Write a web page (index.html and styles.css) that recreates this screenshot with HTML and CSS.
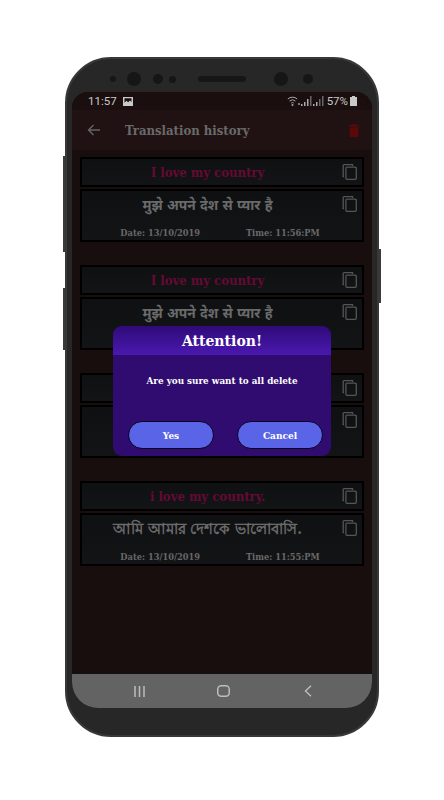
FILE: index.html
```html
<!DOCTYPE html>
<html lang="en">
<head>
  <meta charset="UTF-8">
  <meta name="viewport" content="width=device-width, initial-scale=1.0">
  <title>Translation history</title>
  <link rel="stylesheet" href="styles.css">
</head>
<body>
  <div class="phone">
    <span class="side-btn btn-a"></span>
    <span class="side-btn btn-b"></span>
    <span class="side-btn btn-c"></span>

    <div class="sensors">
      <span class="dot d6"></span>
      <span class="dot d14"></span>
      <span class="dot d10"></span>
      <span class="dot d8"></span>
      <span class="speaker"></span>
      <span class="dot d14"></span>
      <span class="dot d10 last"></span>
    </div>

    <div class="screen">
      <div class="status-bar">
        <span class="clock">11:57</span>
        <svg class="pic-icon" width="10" height="9" viewBox="0 0 10 9"><path fill="#c9c9c9" fill-rule="evenodd" d="M0 0h10v9H0zM1.5 1.2v4.6l2-2 1.6 1.5L7 3.4l1.5 1.5V1.2z"/></svg>
        <span class="status-right">
          <svg width="13" height="10" viewBox="0 0 13 10"><path fill="none" stroke="#aaa" d="M.8 3a7 7 0 0 1 9.4 0M2.6 5a4.4 4.4 0 0 1 5.8 0M4.3 7a2 2 0 0 1 2.4 0"/><circle cx="5.5" cy="9" r="1" fill="#aaa"/><path fill="#777" d="M11 7h2v2h-2z"/></svg>
          <svg width="11" height="10" viewBox="0 0 11 10"><path fill="#aaa" d="M0 8h1.5v2H0zM3 6h1.5v4H3zM6 3h1.5v7H6z"/><path fill="#666" d="M9 0h1.5v10H9z"/></svg>
          <svg width="11" height="10" viewBox="0 0 11 10"><path fill="#aaa" d="M0 8h1.5v2H0zM3 6h1.5v4H3z"/><path fill="#666" d="M6 3h1.5v7H6zM9 0h1.5v10H9z"/></svg>
          <span class="battery-text">57%</span>
          <svg width="7" height="10" viewBox="0 0 7 10"><path fill="#c9c9c9" d="M2 0h3v1h2v9H0V1h2z"/></svg>
        </span>
      </div>

      <div class="toolbar">
        <svg class="back" width="14" height="12" viewBox="0 0 14 12"><path fill="none" stroke="#666" stroke-width="1.3" d="M13 6H1.5M6.5 1 1.5 6l5 5"/></svg>
        <span class="toolbar-title">Translation history</span>
        <svg class="trash" width="10" height="13" viewBox="0 0 10 13"><path fill="#5c0808" d="M3.5 0h3l.5 1h3v1.5H0V1h3zM.7 3.3h8.6V13H.7z"/></svg>
      </div>

      <div class="history">
        <div class="item">
          <div class="card source">
            <span class="source-text">I love my country</span>
            <svg class="copy"><use href="#copy-icon"/></svg>
          </div>
          <div class="card result">
            <div class="result-text">मुझे अपने देश से प्यार है</div>
            <svg class="copy"><use href="#copy-icon"/></svg>
            <div class="stamp"><span>Date: 13/10/2019</span><span>Time: 11:56:PM</span></div>
          </div>
        </div>

        <!-- the dialog covers the rest of this one -->
        <div class="item">
          <div class="card source">
            <span class="source-text">I love my country</span>
            <svg class="copy"><use href="#copy-icon"/></svg>
          </div>
          <div class="card result">
            <div class="result-text">मुझे अपने देश से प्यार है</div>
            <svg class="copy"><use href="#copy-icon"/></svg>
          </div>
        </div>

        <!-- only the copy icons show here -->
        <div class="item">
          <div class="card source">
            <svg class="copy"><use href="#copy-icon"/></svg>
          </div>
          <div class="card result">
            <svg class="copy"><use href="#copy-icon"/></svg>
          </div>
        </div>

        <div class="item">
          <div class="card source">
            <span class="source-text">i love my country.</span>
            <svg class="copy"><use href="#copy-icon"/></svg>
          </div>
          <div class="card result">
            <div class="result-text bengali">আমি আমার দেশকে ভালোবাসি.</div>
            <svg class="copy"><use href="#copy-icon"/></svg>
            <div class="stamp"><span>Date: 13/10/2019</span><span>Time: 11:55:PM</span></div>
          </div>
        </div>
      </div>

      <div class="nav-bar">
        <span class="nav-cell">
          <svg width="11" height="11" viewBox="0 0 11 11"><path stroke="#bdbdbd" stroke-width="1.5" d="M1 0v11M5.5 0v11M10 0v11"/></svg>
        </span>
        <span class="nav-cell">
          <svg width="13" height="12" viewBox="0 0 13 12"><rect x=".75" y=".75" width="11.5" height="10.5" rx="3.5" fill="none" stroke="#bdbdbd" stroke-width="1.5"/></svg>
        </span>
        <span class="nav-cell">
          <svg width="8" height="12" viewBox="0 0 8 12"><path fill="none" stroke="#bdbdbd" stroke-width="1.4" d="M7 .8 1.5 6 7 11.2"/></svg>
        </span>
      </div>

      <div class="dialog">
        <div class="dialog-head">Attention!</div>
        <div class="dialog-msg">Are you sure want to all delete</div>
        <div class="dialog-actions">
          <button class="dialog-btn">Yes</button>
          <button class="dialog-btn">Cancel</button>
        </div>
      </div>
    </div>
  </div>

  <svg width="0" height="0" class="defs">
    <symbol id="copy-icon" viewBox="0 0 15 16">
      <path fill="none" stroke="#555" stroke-width="1.3" d="M2 12.5H1.2V1.6Q1.2.7 2.1.7H10.5V2"/>
      <rect x="3.9" y="3.2" width="10.4" height="12.1" rx="1" fill="none" stroke="#555" stroke-width="1.3"/>
    </symbol>
  </svg>
</body>
</html>
```

FILE: styles.css
```css
body, html {
  margin: 0;
  padding: 0;
  background: #fff;
}
body {
  font-family: "DejaVu Serif", "Noto Sans", serif;
  font-stretch: condensed;
}
.defs {
  position: absolute;
}
.phone {
  position: relative;
  box-sizing: border-box;
  width: 314px;
  height: 680px;
  margin: 57px 0 0 65px;
  padding: 13px 5px 27px;
  background: #272727;
  border: 2px solid #383838;
  border-radius: 46px;
  display: flex;
  flex-direction: column;
}
.side-btn {
  position: absolute;
  width: 2px;
  background: #3a3a3a;
}
.btn-a {
  left: -4px;
  top: 97px;
  height: 96px;
}
.btn-b {
  left: -4px;
  top: 229px;
  height: 62px;
}
.btn-c {
  right: -4px;
  top: 190px;
  height: 54px;
}

/* top bezel */
.sensors {
  height: 14px;
  margin-bottom: 6px;
  padding-left: 38px;
  display: flex;
  align-items: center;
}
.dot {
  flex: none;
  border-radius: 50%;
  background: #161616;
}
.d6 { width: 6px; height: 6px; margin-right: 11px; }
.d14 { width: 14px; height: 14px; margin-right: 12px; }
.d10 { width: 10px; height: 10px; margin-right: 6px; }
.d8 { width: 7px; height: 7px; margin-right: 22px; }
.last { margin-left: 3px; }
.speaker {
  flex: none;
  width: 48px;
  height: 6px;
  margin-right: 28px;
  border-radius: 3px;
  background: #161616;
}

.screen {
  position: relative;
  flex: 1;
  display: flex;
  flex-direction: column;
  background: #190e0e;
  border-radius: 16px 16px 26px 26px;
  overflow: hidden;
}
.status-bar {
  height: 18px;
  flex: none;
  padding: 0 15px 0 16px;
  display: flex;
  align-items: center;
  background: #1a0e0e;
  font-family: Roboto, sans-serif;
  font-stretch: normal;
  font-size: 11.5px;
  color: #c9c9c9;
}
.pic-icon {
  margin-left: 6px;
}
.status-right {
  margin-left: auto;
  display: flex;
  align-items: center;
  gap: 1px;
}
.battery-text {
  margin: 0 1px 0 2px;
}
.toolbar {
  height: 40px;
  flex: none;
  display: flex;
  align-items: center;
  padding: 0 13px 0 15px;
  background: #201212;
}
.toolbar-title {
  margin-left: 24px;
  font-size: 13px;
  font-weight: 700;
  color: #6a6a6a;
  white-space: nowrap;
}
.trash {
  margin-left: auto;
}

.history {
  flex: 1;
  padding: 7px 8px 0;
  display: flex;
  flex-direction: column;
  gap: 23px;
}
.item {
  display: flex;
  flex-direction: column;
  gap: 2px;
}
.card {
  position: relative;
  box-sizing: border-box;
  background: linear-gradient(#0f1012, #131416);
  border: 2px solid #000;
}
.source {
  height: 30px;
  padding-right: 29px;
  display: flex;
  align-items: center;
  justify-content: center;
}
.source-text {
  font-size: 13px;
  font-weight: 700;
  color: #660a34;
  white-space: nowrap;
}
.result {
  height: 53px;
  padding-top: 4px;
  display: flex;
  flex-direction: column;
}
.result-text {
  height: 22px;
  padding-right: 29px;
  line-height: 20px;
  text-align: center;
  font-size: 13.8px;
  font-weight: 700;
  color: #6a6a6a;
  white-space: nowrap;
}
.bengali {
  font-size: 15.2px;
}
.copy {
  position: absolute;
  right: 5px;
  top: 5px;
  width: 15px;
  height: 16px;
}
.stamp {
  margin-top: 10px;
  padding-right: 4px;
  display: flex;
  justify-content: center;
  gap: 46px;
  font-size: 9.2px;
  font-weight: 700;
  color: #686868;
  white-space: nowrap;
}

.nav-bar {
  height: 35px;
  flex: none;
  display: flex;
  justify-content: center;
  align-items: center;
  padding-left: 3px;
  background: #636363;
  border-top: 1px solid #111;
  box-sizing: border-box;
}
.nav-cell {
  width: 84px;
  display: flex;
  justify-content: center;
}

/* dialog sits over the list */
.dialog {
  position: absolute;
  left: 41px;
  top: 234px;
  width: 218px;
  height: 130px;
  display: flex;
  flex-direction: column;
  border-radius: 9px;
  overflow: hidden;
  background: #300b70;
}
.dialog-head {
  height: 29px;
  flex: none;
  line-height: 29px;
  text-align: center;
  font-size: 15.6px;
  font-weight: 700;
  color: #fff;
  background: linear-gradient(#2f0a78, #4a19b0);
}
.dialog-msg {
  margin-top: 20px;
  text-align: center;
  font-size: 9.8px;
  font-weight: 700;
  color: #fff;
}
.dialog-actions {
  margin-top: auto;
  margin-bottom: 7px;
  padding: 0 8px 0 15px;
  display: flex;
  justify-content: space-between;
}
.dialog-btn {
  box-sizing: border-box;
  width: 86px;
  height: 28px;
  padding: 0;
  border: 1.5px solid #08021e;
  border-radius: 14px;
  background: #5a64e6;
  color: #fff;
  font-family: inherit;
  font-stretch: inherit;
  font-size: 10px;
  font-weight: 700;
}
```
